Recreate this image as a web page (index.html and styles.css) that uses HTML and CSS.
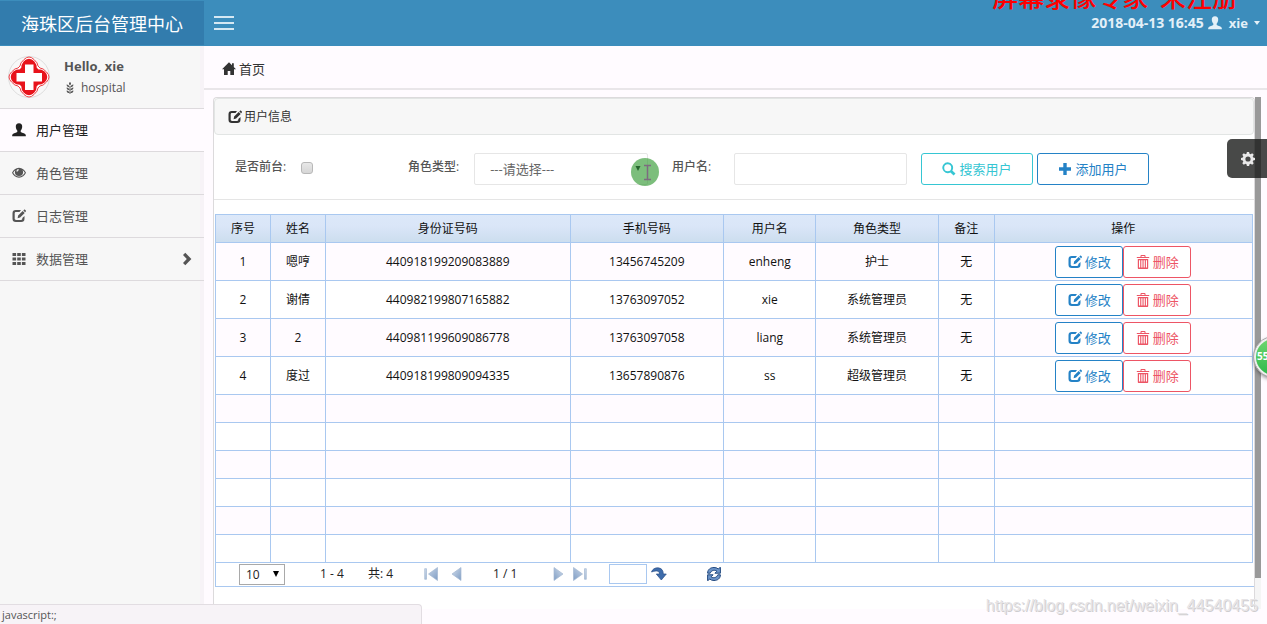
FILE: index.html
```
<!DOCTYPE html>
<html lang="zh-CN">
<head>
<meta charset="utf-8">
<title>海珠区后台管理中心</title>
<link rel="stylesheet" href="styles.css">
</head>
<body>
<svg class="sprite" aria-hidden="true">
  <symbol id="home" viewBox="0 0 14 14"><path d="M7 .3 0 7.3h2V13h3.700V9h2.600v4H12V7.300h2L11.800 5V1.200H10v2.100z"/></symbol>
  <symbol id="user" viewBox="0 0 14 14"><path d="M7 .2c2.200 0 3.300 1.500 3.200 3.500-.1 2-.8 3-1.500 3.900v1.300c1.800.9 4.800 1.500 5.100 3.200V13.300H.2v-1.200c.3-1.700 3.300-2.300 5.100-3.200V7.600C4.600 6.700 3.900 5.700 3.800 3.700 3.700 1.700 4.800.2 7 .2z"/></symbol>
  <symbol id="eye" viewBox="0 0 14 14"><path fill-rule="evenodd" d="M7 1.700c3.300 0 5.600 2.300 7 5.100-1.400 2.800-3.700 4.900-7 4.900S1.400 9.600 0 6.800c1.400-2.800 3.700-5.100 7-5.100zM3.600 4C2.600 4.700 1.800 5.700 1.200 6.800c1.300 2.300 3.200 3.800 5.800 3.800s4.500-1.500 5.800-3.800c-.6-1.100-1.400-2.100-2.400-2.800.5.700.7 1.500.7 2.300a4.100 3.700 0 0 1-8.200 0c0-.8.200-1.600.7-2.300zM6.500 3.100c-1.200.1-2.100 1.200-2 2.500l1 .1c0-.9.500-1.400 1.300-1.500z"/></symbol>
  <symbol id="edit" viewBox="0 0 14 14"><path d="M9 1H3.800A3.300 3.300 0 0 0 .5 4.300v5.400A3.300 3.300 0 0 0 3.800 13h5.400a3.300 3.300 0 0 0 3.300-3.300V7l-2.200 2v.8c0 .7-.5 1.200-1.200 1.200H4c-.7 0-1.300-.5-1.300-1.200V4.300c0-.7.6-1.200 1.300-1.200h3.500z"/><path d="m5.600 9.300.5-2.700L10.700 2l2 2-4.600 4.600zM11.300 1.500l.8-.8c.3-.3.600-.3.900 0l.8.8c.3.300.3.600 0 .9l-.7.800z"/></symbol>
  <symbol id="grid" viewBox="0 0 14 14"><path d="M.5 1h3.600v3H.5zM5.200 1h3.600v3H5.200zM9.900 1h3.600v3H9.900zM.5 5.500h3.600v3H.5zM5.200 5.500h3.600v3H5.200zM9.900 5.500h3.600v3H9.900zM.5 10h3.600v3H.5zM5.200 10h3.600v3H5.200zM9.900 10h3.600v3H9.900z"/></symbol>
  <symbol id="chevron" viewBox="0 0 14 14"><path d="m5.300.8 6.100 6.200-6.100 6.200-2.300-2.300L6.800 7 3 3.100z"/></symbol>
  <symbol id="search" viewBox="0 0 14 14"><path fill-rule="evenodd" d="M5.700.3a5.400 5.400 0 0 1 4.600 8.200l3.200 3-1.900 2-3.200-3.100A5.400 5.400 0 1 1 5.700.3zm0 1.900a3.500 3.500 0 1 0 0 7 3.500 3.500 0 0 0 0-7z"/></symbol>
  <symbol id="plus" viewBox="0 0 14 14"><path d="M5.300 1h3.400v4.300H13v3.400H8.700V13H5.300V8.700H1V5.300h4.300z"/></symbol>
  <symbol id="trash" viewBox="0 0 14 14"><path fill-rule="evenodd" d="M4.500 1.900V.9c0-.5.300-.8.800-.8h3.400c.5 0 .8.300.8.800v1h3.700v1.100H.8V1.900zm1-.9v.9h3V1zM1.800 3.900h10.400V13c0 .6-.4 1-1 1H2.800c-.6 0-1-.4-1-1zm1.200 1.300v7.400h1.200V5.200zm2.300 0v7.400h1.200V5.200zm2.300 0v7.400h1.200V5.200zm2.300 0v7.400h1.100V5.200z"/></symbol>
  <symbol id="gear" viewBox="0 0 14 14"><path fill-rule="evenodd" d="M5.900 0h2.200l.4 1.800 1.100.5L11.200 1.300l1.500 1.500-1 1.600.5 1.100 1.800.4v2.200l-1.800.4-.5 1.100 1 1.600-1.500 1.500-1.600-1-1.100.5-.4 1.800H5.900l-.4-1.800-1.100-.5-1.600 1-1.500-1.500 1-1.600-.5-1.100L0 8.100V5.900l1.800-.4.5-1.100-1-1.600 1.500-1.500 1.600 1 1.100-.5zM7 4.400a2.600 2.600 0 1 0 0 5.200 2.600 2.600 0 0 0 0-5.200z"/></symbol>
  <symbol id="grain" viewBox="0 0 14 14"><path d="M7 0c1.600 1.200 1.600 2.800 0 4C5.400 2.800 5.400 1.200 7 0zM3 3c2 .1 3 1.100 3.400 3C4.200 6 3.100 5 3 3zm8 0c-.1 2-1.200 3-3.400 3C8 4.100 9 3.100 11 3zM3 6.500c2 .1 3 1.100 3.400 3-2.200 0-3.300-1-3.400-3zm8 0c-.1 2-1.200 3-3.400 3 .4-1.900 1.400-2.900 3.400-3zM6.500 5h1v9h-1zM3 9.800c2 .1 3 1.100 3.400 3-2.200 0-3.300-1-3.400-3zm8 0c-.1 2-1.200 3-3.400 3 .4-1.900 1.400-2.900 3.400-3z"/></symbol>
  <linearGradient id="steel" x1="0" y1="0" x2="1" y2="1"><stop offset="0" stop-color="#d3deec"/><stop offset="1" stop-color="#7f9dc4"/></linearGradient>
  <symbol id="prev" viewBox="0 0 14 14"><path d="M11 .5v13L2 7z" fill="url(#steel)" stroke="#a3b7d2" stroke-width=".7"/></symbol>
  <symbol id="first" viewBox="0 0 14 14"><path d="M13.500.5v13L4.500 7zM.7 1.700h1.800v10.600H.7z" fill="url(#steel)" stroke="#a3b7d2" stroke-width=".7"/></symbol>
</svg>

<header class="topbar">
  <h1 class="brand">海珠区后台管理中心</h1>
  <button class="menu-toggle" type="button" aria-label="菜单"><span></span><span></span><span></span></button>
  <div class="account">
    <time>2018-04-13 16:45</time>
    <svg class="icon"><use href="#user"/></svg>
    <span class="account-name">xie</span>
    <i class="caret"></i>
  </div>
  <div class="recorder-mark">屏幕录像专家&nbsp; 未注册</div>
</header>

<div class="layout">
  <aside class="sidebar">
    <div class="profile">
      <svg class="avatar" viewBox="0 0 42 42">
        <circle cx="21" cy="21" r="20.500" fill="#f8f8f8" stroke="#dedede"/>
        <path d="M12 10Q12 7 16 3.500Q21-1.500 26 3.500Q30 7 30 10L32 12Q35 12 38.500 16Q43.500 21 38.500 26Q35 30 32 30L30 32Q30 35 26 38.500Q21 43.500 16 38.500Q12 35 12 32L10 30Q7 30 3.500 26Q-1.500 21 3.500 16Q7 12 10 12Z" fill="#fff" stroke="#ee4046"/>
        <path d="M14 12c0-5 3.500-8.500 7-8.500s7 3.500 7 8.500l2 2c5 0 8.500 3.500 8.500 7S35 28 30 28l-2 2c0 5-3.500 8.500-7 8.500S14 35 14 30l-2-2c-5 0-8.500-3.500-8.500-7S7 14 12 14z" fill="#e8131b" stroke="#e8131b" stroke-width="1.500"/>
        <path d="M17 8.500h8.500V17H34v8.500h-8.500V34H17v-8.500H8.500V17H17z" fill="#fff"/>
      </svg>
      <div class="profile-text">
        <strong>Hello, xie</strong>
        <span class="role"><svg class="icon icon-small"><use href="#grain"/></svg>hospital</span>
      </div>
    </div>
    <nav class="menu">
      <a class="menu-item active" href="#"><svg class="icon"><use href="#user"/></svg>用户管理</a>
      <a class="menu-item" href="#"><svg class="icon"><use href="#eye"/></svg>角色管理</a>
      <a class="menu-item" href="#"><svg class="icon"><use href="#edit"/></svg>日志管理</a>
      <a class="menu-item" href="#"><svg class="icon"><use href="#grid"/></svg>数据管理<svg class="icon expand"><use href="#chevron"/></svg></a>
    </nav>
  </aside>

  <main class="content">
    <nav class="crumbs"><a href="#"><svg class="icon"><use href="#home"/></svg>首页</a></nav>
    <div class="workspace">
      <section class="panel">
        <h2 class="panel-title"><svg class="icon"><use href="#edit"/></svg>用户信息</h2>
        <form class="filters">
          <div class="field field-check"><label for="front">是否前台:</label><input type="checkbox" id="front"></div>
          <div class="field field-role"><label for="role">角色类型:</label>
            <div class="select-wrap">
              <select id="role"><option>---请选择---</option></select>
              <svg class="pointer" viewBox="0 0 28 28"><circle cx="14" cy="14" r="14" fill="#369b36" fill-opacity=".65"/><path d="M4.500 8h5L7 13z" fill="#25652c"/><path d="M13 7.500h7M16.500 7.500v14M13 21.500h7" stroke="#7d6b80" stroke-width="1.500" fill="none"/></svg>
            </div>
          </div>
          <div class="field field-name"><label for="name">用户名:</label><input type="text" id="name"></div>
          <div class="actions">
            <button class="btn btn-search" type="button"><svg class="icon"><use href="#search"/></svg>搜索用户</button>
            <button class="btn btn-edit" type="button"><svg class="icon"><use href="#plus"/></svg>添加用户</button>
          </div>
        </form>
        <div class="list">
          <table class="users">
            <colgroup><col class="c-no"><col class="c-person"><col class="c-id"><col class="c-phone"><col class="c-user"><col class="c-role"><col class="c-note"><col></colgroup>
            <thead><tr><th>序号</th><th>姓名</th><th>身份证号码</th><th>手机号码</th><th>用户名</th><th>角色类型</th><th>备注</th><th>操作</th></tr></thead>
            <tbody>
              <tr class="filled"><td>1</td><td>嗯哼</td><td>440918199209083889</td><td>13456745209</td><td>enheng</td><td>护士</td><td>无</td><td><div class="ops"><button class="btn btn-edit" type="button"><svg class="icon"><use href="#edit"/></svg>修改</button><button class="btn btn-delete" type="button"><svg class="icon"><use href="#trash"/></svg>删除</button></div></td></tr>
              <tr class="filled"><td>2</td><td>谢倩</td><td>440982199807165882</td><td>13763097052</td><td>xie</td><td>系统管理员</td><td>无</td><td><div class="ops"><button class="btn btn-edit" type="button"><svg class="icon"><use href="#edit"/></svg>修改</button><button class="btn btn-delete" type="button"><svg class="icon"><use href="#trash"/></svg>删除</button></div></td></tr>
              <tr class="filled"><td>3</td><td>2</td><td>440981199609086778</td><td>13763097058</td><td>liang</td><td>系统管理员</td><td>无</td><td><div class="ops"><button class="btn btn-edit" type="button"><svg class="icon"><use href="#edit"/></svg>修改</button><button class="btn btn-delete" type="button"><svg class="icon"><use href="#trash"/></svg>删除</button></div></td></tr>
              <tr class="filled"><td>4</td><td>度过</td><td>440918199809094335</td><td>13657890876</td><td>ss</td><td>超级管理员</td><td>无</td><td><div class="ops"><button class="btn btn-edit" type="button"><svg class="icon"><use href="#edit"/></svg>修改</button><button class="btn btn-delete" type="button"><svg class="icon"><use href="#trash"/></svg>删除</button></div></td></tr>
              <tr><td></td><td></td><td></td><td></td><td></td><td></td><td></td><td></td></tr>
              <tr><td></td><td></td><td></td><td></td><td></td><td></td><td></td><td></td></tr>
              <tr><td></td><td></td><td></td><td></td><td></td><td></td><td></td><td></td></tr>
              <tr><td></td><td></td><td></td><td></td><td></td><td></td><td></td><td></td></tr>
              <tr><td></td><td></td><td></td><td></td><td></td><td></td><td></td><td></td></tr>
              <tr><td></td><td></td><td></td><td></td><td></td><td></td><td></td><td></td></tr>
            </tbody>
          </table>
          <div class="pager">
            <div class="page-size"><select aria-label="每页条数"><option>10</option></select><i></i></div>
            <span>1 - 4</span>
            <span>共: 4</span>
            <button type="button" aria-label="首页"><svg class="icon"><use href="#first"/></svg></button>
            <button type="button" aria-label="上一页"><svg class="icon"><use href="#prev"/></svg></button>
            <span>1 / 1</span>
            <button type="button" aria-label="下一页"><svg class="icon flip"><use href="#prev"/></svg></button>
            <button type="button" aria-label="末页"><svg class="icon flip"><use href="#first"/></svg></button>
            <input type="text" aria-label="页码">
            <button type="button" aria-label="跳转"><svg class="icon icon-wide" viewBox="0 0 16 14"><path d="M.5 5C1.500 2 4 .7 7 .8c3.500.2 5.300 2.600 5.300 6.200h3L10.300 13 5.300 7h3.200C8.500 4 6 3 .5 5z" fill="#3e6cab" stroke="#294f87" stroke-width=".7"/></svg></button>
            <button type="button" aria-label="刷新"><svg class="icon" viewBox="0 0 14 14"><path d="M.6 6.200C.6 2.400 3.500.5 7 .5c1.700 0 3.200.5 4.200 1.400L13.400.3v5.900H7.900l2-2C7.900 2.600 4.500 3 3.200 6.200zM13.400 7.800c0 3.800-2.900 5.700-6.400 5.700-1.700 0-3.200-.5-4.200-1.400L.6 13.700V7.800h5.500l-2 2c2 1.600 5.400 1.200 6.700-2z" fill="#6d94c8" stroke="#234a80"/></svg></button>
          </div>
        </div>
      </section>
      <div class="scroll-track"><div class="scroll-thumb"></div></div>
    </div>
  </main>
</div>

<button class="settings" type="button" aria-label="设置"><svg class="icon"><use href="#gear"/></svg></button>
<div class="speed-ball">55</div>
<div class="status">javascript:;</div>
<div class="watermark">https://blog.csdn.net/weixin_44540455</div>
</body>
</html>
```

FILE: styles.css
```
* { box-sizing: border-box; }

body {
  margin: 0;
  min-height: 100vh;
  display: flex;
  flex-direction: column;
  position: relative;
  overflow: hidden;
  background: #fffbff;
  color: #333;
  font: 13px/20px "Open Sans", "Noto Sans CJK SC", sans-serif;
}

a { color: inherit; text-decoration: none; }
button, input, select { font: inherit; color: inherit; }
h1, h2 { margin: 0; font-weight: 400; }

.sprite { position: absolute; width: 0; height: 0; }
.icon { width: 14px; height: 14px; fill: currentColor; flex: none; display: block; }
.icon-small { width: 12px; height: 12px; }
.icon-wide { width: 16px; }
.flip { transform: scaleX(-1); }

/* Top bar */
.topbar {
  position: relative;
  display: flex;
  align-items: center;
  height: 46px;
  background: #3c8dbc;
  color: #e3f0f8;
  overflow: hidden;
}
.brand {
  width: 204px;
  line-height: 44px;
  text-align: center;
  background: #327cad;
  color: #fff;
  font-family: "KaiTi", "Noto Sans CJK SC", serif;
  font-size: 18px;
  font-weight: 400;
}
.menu-toggle {
  display: flex;
  flex-direction: column;
  gap: 4px;
  margin-left: 10px;
  padding: 0;
  border: 0;
  background: none;
}
.menu-toggle span { width: 20px; height: 2px; background: #d5e8f3; }
.account {
  display: flex;
  align-items: center;
  margin-left: auto;
  padding-right: 7px;
  gap: 4px;
  font-weight: 700;
}
.account time { font-size: 14px; }
.account-name { margin-left: 3px; }
.caret {
  margin-left: 2px;
  border: 3px solid transparent;
  border-top: 4px solid;
  border-bottom: 0;
}
.recorder-mark {
  position: absolute;
  top: -20px;
  right: 29px;
  color: #f00;
  font: 500 26px/32px "SimSun", "Noto Sans CJK SC", serif;
}

/* Sidebar */
.layout { flex: 1; display: flex; }
.sidebar {
  width: 204px;
  flex: none;
  background: linear-gradient(to left, #f7f3f7 4px, #f7f7f7 4px);
}
.profile {
  display: flex;
  gap: 14px;
  height: 62px;
  padding: 10px 8px;
}
.avatar { width: 42px; height: 42px; }
.profile-text { display: flex; flex-direction: column; gap: 2px; color: #555; }
.role { display: flex; align-items: center; gap: 5px; font-size: 12px; }
.menu-item {
  display: flex;
  align-items: center;
  gap: 10px;
  height: 43px;
  padding: 0 10px 0 12px;
  border-top: 1px solid #dddadd;
  color: #555;
}
.menu-item:last-child { height: 44px; border-bottom: 1px solid #dddadd; }
.menu-item.active { background: #fffbff; color: #222; }
.expand { margin-left: auto; }

/* Content */
.content { flex: 1; min-width: 0; display: flex; flex-direction: column; }
.crumbs { height: 44px; padding: 13px 18px; border-bottom: 2px solid #e9e6e9; }
.crumbs a { display: inline-flex; align-items: center; gap: 3px; }
.workspace { flex: 1; display: flex; padding: 7px 6px 15px 9px; }
.panel {
  flex: 1;
  min-width: 0;
  background: #fff;
  border: 1px solid #dcdadc;
  border-bottom: 0;
  border-radius: 4px 4px 0 0;
}
.panel-title {
  display: flex;
  align-items: center;
  gap: 2px;
  height: 37px;
  padding: 0 13px;
  background: #f7f7f7;
  border: 1px solid #e2e5e4;
  border-radius: 4px;
  font-size: 12px;
}
.filters {
  display: flex;
  height: 65px;
  padding: 18px 21px 0;
  border-bottom: 1px solid #e5e5e5;
}
.field { display: flex; align-items: flex-start; gap: 15px; }
.field label { padding-top: 4px; font-size: 12px; font-weight: 500; color: #555; white-space: nowrap; }
.field-check { width: 173px; }
.field-check input {
  appearance: none;
  margin: 9px 0 0;
  width: 12px;
  height: 12px;
  border: 1px solid #b8b8b8;
  border-radius: 3px;
  background: linear-gradient(#e8e8e8, #d6d6d6);
}
.field-role { width: 264px; }
.select-wrap { position: relative; }
.select-wrap select {
  appearance: none;
  display: block;
  width: 174px;
  height: 32px;
  padding: 0 15px;
  border: 1px solid #e6e6e6;
  border-radius: 2px;
  background: #fff;
  color: #666;
}
.pointer { position: absolute; right: -11px; top: 5px; width: 28px; height: 28px; }
.field-name { gap: 23px; width: 249px; }
.field-name input {
  flex: 1;
  min-width: 0;
  margin-right: 14px;
  height: 32px;
  border: 1px solid #e6e6e6;
  border-radius: 2px;
}
.actions { display: flex; gap: 4px; }
.actions .btn { width: 112px; }

.btn {
  display: flex;
  align-items: center;
  justify-content: center;
  gap: 3px;
  height: 32px;
  padding: 0;
  border: 1px solid;
  border-radius: 3px;
  background: #fff;
  white-space: nowrap;
}
.btn-search { color: #36c6d3; }
.btn-edit { color: #2482c6; }
.btn-delete { color: #ed5565; }

/* User list */
.list { padding: 14px 0 0 1px; }
.users {
  width: calc(100% - 1px);
  border-collapse: collapse;
  table-layout: fixed;
  color: #111;
  font-size: 12px;
}
.c-no, .c-person { width: 5.3%; }
.c-id { width: 23.6%; }
.c-phone { width: 14.8%; }
.c-user { width: 8.9%; }
.c-role { width: 11.8%; }
.c-note { width: 5.4%; }
.users th, .users td {
  height: 28px;
  padding: 0;
  border: 1px solid #a9c8f0;
  text-align: center;
  font-weight: 400;
}
.users thead tr { background: linear-gradient(#dce8f9, #dae6f8 40%, #cbddee); }
.users tbody tr:nth-child(odd) { background: #fffbff; }
.users .filled td { height: 38px; }
.ops { display: flex; justify-content: center; font-size: 13px; }
.ops .btn { width: 68px; }

.pager {
  display: grid;
  grid-template-columns: 81px 48px 56px 26px 43px 58px 22px 36px 42px 56px 1fr;
  align-items: center;
  height: 24px;
  padding: 0 0 1px 23px;
  border: solid #a9c8f0;
  border-width: 0 0 1px 1px;
  font-size: 12px;
  color: #222;
}
.pager button { justify-self: start; padding: 0; border: 0; background: none; }
.pager input { width: 38px; height: 20px; border: 1px solid #a9c8f0; background: #fff; }
.page-size { position: relative; width: 46px; }
.page-size select {
  appearance: none;
  display: block;
  width: 100%;
  height: 21px;
  padding: 0 6px;
  border: 1px solid #a9a9a9;
  background: #fff;
}
.page-size i {
  position: absolute;
  right: 6px;
  top: 7px;
  border: 3px solid transparent;
  border-top: 6px solid #000;
  border-bottom: 0;
}

.scroll-track { width: 6px; background: #f5f5f5; }
.scroll-thumb { height: 94%; background: #999; }

/* Floating items */
.settings {
  position: absolute;
  right: 0;
  top: 139px;
  width: 40px;
  height: 39px;
  padding: 0 0 0 14px;
  border: 0;
  border-radius: 5px 0 0 5px;
  background: rgba(20, 22, 20, .78);
  color: #e8e8e8;
}
.speed-ball {
  position: absolute;
  right: -27px;
  top: 337px;
  width: 40px;
  height: 40px;
  padding-left: 1px;
  border: 2px solid #eee;
  border-radius: 50%;
  outline: 1px solid #aaa;
  background: linear-gradient(#6fd66f, #2fb94c);
  box-shadow: 0 2px 4px rgba(0, 0, 0, .5);
  color: #fff;
  font-size: 10px;
  font-weight: 700;
  line-height: 34px;
}
.status {
  position: absolute;
  left: 0;
  bottom: 0;
  width: 422px;
  height: 20px;
  padding-left: 2px;
  border: solid #e2dde2;
  border-width: 1px 1px 0 0;
  border-radius: 0 4px 0 0;
  background: #f7f3f7;
  color: #555;
  font-size: 11px;
}
.watermark {
  position: absolute;
  right: 9px;
  bottom: 8px;
  color: #e6e4e6;
  text-shadow: 1px 1px 0 #cfcdcf;
  font: 16px/20px "Liberation Sans", sans-serif;
}
```
